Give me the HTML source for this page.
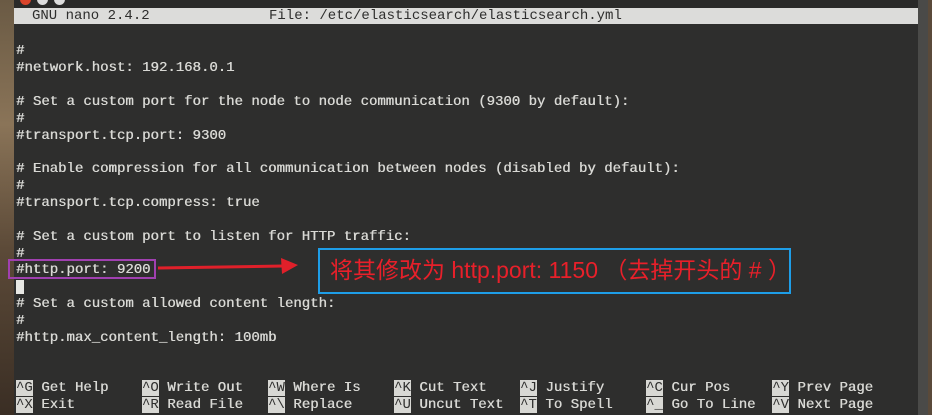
<!DOCTYPE html>
<html><head><meta charset="utf-8"><style>
html,body{margin:0;padding:0}
body{width:932px;height:415px;background:#2e2e2d;position:relative;overflow:hidden;font-family:"Liberation Mono","DejaVu Sans Mono",monospace;font-size:14px;color:#d8d8d4}
.l{position:absolute;left:16px;white-space:pre;line-height:17px;height:17px;text-shadow:0.4px 0 0 #d8d8d4;margin-top:1px}
.title{position:absolute;left:14px;top:8px;width:904px;height:16px;background:#dcdcda;color:#2e2e2d}
.k{background:#d8d8d4;color:#2e2e2d;text-shadow:none}
.left{position:absolute;left:0;top:0;width:14px;height:415px;background:linear-gradient(#6a5a44,#8a7458 30%,#5c4a38 60%,#3a2e24)}
.sb{position:absolute;left:918px;top:0;width:10px;height:415px;background:#4a4a48}
.rt{position:absolute;left:928px;top:0;width:4px;height:415px;background:#5a4a3a}
.top{position:absolute;left:0;top:0;width:932px;height:8px;background:#2a2a29}
</style></head><body>
<div class="top"></div>
<div style="position:absolute;left:20px;top:-6px;width:11px;height:11px;border-radius:50%;background:#d9442b"></div>
<div style="position:absolute;left:37px;top:-6px;width:11px;height:11px;border-radius:50%;background:#ddd"></div>
<div style="position:absolute;left:54px;top:-6px;width:11px;height:11px;border-radius:50%;background:#ddd"></div>
<div class="left"></div>
<div class="sb"></div><div class="rt"></div>
<div class="title"><span style="position:absolute;left:18px;top:0px;white-space:pre;line-height:17px">GNU nano 2.4.2</span><span style="position:absolute;left:255px;top:0px;white-space:pre;line-height:17px">File: /etc/elasticsearch/elasticsearch.yml</span></div>
<div class="l" style="top:42px">#</div>
<div class="l" style="top:59px">#network.host: 192.168.0.1</div>
<div class="l" style="top:93px"># Set a custom port for the node to node communication (9300 by default):</div>
<div class="l" style="top:110px">#</div>
<div class="l" style="top:127px">#transport.tcp.port: 9300</div>
<div class="l" style="top:160px"># Enable compression for all communication between nodes (disabled by default):</div>
<div class="l" style="top:177px">#</div>
<div class="l" style="top:194px">#transport.tcp.compress: true</div>
<div class="l" style="top:228px"># Set a custom port to listen for HTTP traffic:</div>
<div class="l" style="top:245px">#</div>
<div class="l" style="top:261px">#http.port: 9200</div>
<div style="position:absolute;left:16px;top:280px;width:8px;height:14px;background:#e8e8e4"></div>
<div class="l" style="top:295px"># Set a custom allowed content length:</div>
<div class="l" style="top:312px">#</div>
<div class="l" style="top:329px">#http.max_content_length: 100mb</div>
<div style="position:absolute;left:8px;top:259px;width:144px;height:16px;border:2px solid #a040b0"></div>
<svg style="position:absolute;left:0;top:0" width="932" height="415"><line x1="158" y1="268" x2="284" y2="266" stroke="#e0202a" stroke-width="3"/><polygon points="298,265 281,258 282,274" fill="#e0202a"/></svg>
<div style="position:absolute;left:318px;top:248px;width:469px;height:42px;border:2px solid #1e9ee8"></div>
<div style="position:absolute;left:330px;top:255px;font-family:'Liberation Sans','Noto Sans CJK SC',sans-serif;font-size:23px;color:#e8202a;white-space:pre;line-height:30px">将其修改为 http.port: 1150 （去掉开头的 # ）</div>
<div class="l" style="top:379px"><span class="k">^G</span> Get Help    <span class="k">^O</span> Write Out   <span class="k">^W</span> Where Is    <span class="k">^K</span> Cut Text    <span class="k">^J</span> Justify     <span class="k">^C</span> Cur Pos     <span class="k">^Y</span> Prev Page</div>
<div class="l" style="top:396px"><span class="k">^X</span> Exit        <span class="k">^R</span> Read File   <span class="k">^\</span> Replace     <span class="k">^U</span> Uncut Text  <span class="k">^T</span> To Spell    <span class="k">^_</span> Go To Line  <span class="k">^V</span> Next Page</div>
</body></html>
